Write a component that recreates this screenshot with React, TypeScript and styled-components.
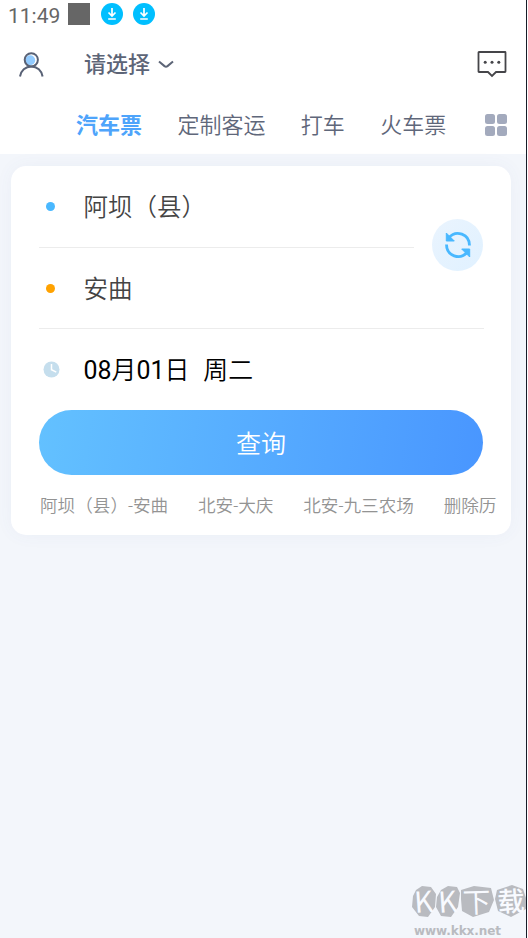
import React from 'react';
import styled, { createGlobalStyle } from 'styled-components';

const Global = createGlobalStyle`
  * { box-sizing: border-box; }
  body { margin: 0; background: #fff; }
`;

const Screen = styled.div`
  position: relative;
  width: 527px;
  height: 938px;
  display: flex;
  flex-direction: column;
  background: #f3f6fb;
  border-right: 1px solid #171c28;
  font-family: Roboto, 'Noto Sans CJK SC', sans-serif;
  white-space: nowrap;
`;

const Header = styled.header`
  height: 154px;
  flex: none;
  background: #fff;
`;

const StatusBar = styled.div`
  height: 30px;
  display: flex;
  align-items: center;
  padding: 0 0 2px 8px;
  color: #666;
  font-size: 21px;
`;

const Time = styled.span`
  width: 60px;
  line-height: 28px;
  padding-top: 3px;
`;

const StatusBlock = styled.span`
  width: 22px;
  height: 22px;
  margin-right: 11px;
  background: #666;
`;

const DownloadIcon = styled.svg`
  width: 22px;
  height: 22px;
  margin-right: 10px;
`;

const TopBar = styled.div`
  height: 68px;
  display: flex;
  align-items: center;
  padding: 0 19px 0 18px;
`;

const CityPicker = styled.div`
  display: flex;
  align-items: center;
  flex: 1;
  margin-left: 39px;
  gap: 8px;
  color: #5d6577;
  font-size: 22px;
  font-weight: 500;
  line-height: 32px;
`;

const CityName = styled.span`
  padding-top: 2px;
`;

const Tabs = styled.nav`
  height: 54px;
  display: flex;
  align-items: center;
  gap: 35.4px;
  padding-left: 76px;
`;

const Tab = styled.span<{ $active?: boolean }>`
  padding-top: 2px;
  color: ${p => (p.$active ? '#4ea4fb' : '#5f677a')};
  font-size: 22px;
  line-height: 32px;
  font-weight: ${p => (p.$active ? 700 : 350)};
`;

const Grid = styled.span`
  display: grid;
  grid-template-columns: 10px 10px;
  gap: 2px;
  margin-left: 3px;
`;

const GridCell = styled.i`
  height: 10px;
  border-radius: 2.5px;
  background: #a3aabd;
`;

const Card = styled.main`
  width: 500px;
  height: 369px;
  margin: 12px 0 0 11px;
  padding: 0 0 0 28px;
  border-radius: 15px;
  background: #fff;
  box-shadow: 0 0 18px rgba(70, 90, 160, 0.05);
`;

const Route = styled.div`
  display: flex;
  align-items: center;
  gap: 18px;
`;

const Stops = styled.div`
  width: 375px;
`;

const Field = styled.div<{ $line?: boolean; $height: number; $width?: number; $color?: string }>`
  height: ${p => p.$height}px;
  width: ${p => p.$width ?? 375}px;
  display: flex;
  align-items: center;
  color: ${p => p.$color ?? '#444'};
  font-weight: 350;
  line-height: 36px;
  border-bottom: ${p => (p.$line ? '1px solid #ececec' : '0')};
`;

const FieldText = styled.span<{ $size?: number }>`
  padding: 3px 0 0 0.5px;
  font-size: ${p => p.$size ?? 24.5}px;
`;

const Digits = styled.span`
  font-weight: 400;
`;

const Marker = styled.span`
  width: 44px;
  padding-left: 4px;
  display: flex;
`;

const Dot = styled.i<{ $color: string }>`
  width: 9px;
  height: 9px;
  margin-left: 3px;
  border-radius: 50%;
  background: ${p => p.$color};
`;

const Weekday = styled.span`
  margin-left: 14px;
`;

const SwapButton = styled.button`
  width: 51px;
  height: 52px;
  margin-top: -5px;
  padding: 0;
  border: 0;
  border-radius: 50%;
  background: linear-gradient(135deg, #eaf4fe, #e0f1ff);
  display: flex;
  align-items: center;
  justify-content: center;
`;

const SearchButton = styled.button`
  display: block;
  width: 444px;
  height: 65px;
  margin: 0 0 17px;
  padding: 4px 0 0;
  border: 0;
  border-radius: 33px;
  background: linear-gradient(98deg, #63c1ff, #4996ff);
  color: #fff;
  font: 350 25px/61px Roboto, 'Noto Sans CJK SC', sans-serif;
`;

const History = styled.div`
  display: flex;
  gap: 29.8px;
  padding-left: 1px;
  color: #939393;
  font-size: 17.6px;
  font-weight: 350;
  line-height: 28px;
`;

const Watermark = styled.aside`
  position: absolute;
  left: 411px;
  top: 880px;
  width: 115px;
  height: 58px;
`;

function Download() {
  return (
    <DownloadIcon viewBox="0 0 22 22" fill="none">
      <circle cx="11" cy="11" r="11" fill="#00bfff" />
      <path d="M11 5v8M7.500 9.500 11 13l3.500-3.500M7.200 16h7.600" stroke="#fff" strokeWidth="1.700" />
    </DownloadIcon>
  );
}

export default function App() {
  return (
    <>
      <Global />
      <Screen>
        <Header>
          <StatusBar>
            <Time>11:49</Time>
            <StatusBlock />
            <Download />
            <Download />
          </StatusBar>
          <TopBar>
            <svg width="27" height="28" viewBox="0 0 27 28" fill="none">
              <circle cx="12.200" cy="10.200" r="5" fill="#92cbff" />
              <circle cx="13.300" cy="9.800" r="6.600" stroke="#596276" strokeWidth="2" />
              <path d="M2 26.500c.8-6 5.500-10.100 11.300-10.100S23.800 20.500 24.600 26.500" stroke="#596276" strokeWidth="2" />
            </svg>
            <CityPicker>
              <CityName>请选择</CityName>
              <svg width="16" height="9" viewBox="0 0 16 9" fill="none">
                <path d="m1 1.500 5.500 4.600q1.500 1.100 3 0L15 1.500" stroke="#5d6577" strokeWidth="2" />
              </svg>
            </CityPicker>
            <svg width="30" height="28" viewBox="0 0 30 28" fill="none">
              <path d="M2 2h26q.5 0 .5.500v19q0 .5-.5.500h-9l-4 4-4-4H2q-.5 0-.5-.5V2.500q0-.5.5-.5Z" stroke="#454549" strokeWidth="1.800" />
              <g fill="#454549"><circle cx="8.200" cy="12.200" r="1.500" /><circle cx="15" cy="12.200" r="1.500" /><circle cx="21.800" cy="12.200" r="1.500" /></g>
            </svg>
          </TopBar>
          <Tabs>
            <Tab $active>汽车票</Tab>
            <Tab>定制客运</Tab>
            <Tab>打车</Tab>
            <Tab>火车票</Tab>
            <Grid><GridCell /><GridCell /><GridCell /><GridCell /></Grid>
          </Tabs>
        </Header>
        <Card>
          <Route>
            <Stops>
              <Field $height={82} $line><Marker><Dot $color="#49b8ff" /></Marker><FieldText>阿坝（县）</FieldText></Field>
              <Field $height={81} $width={445} $line><Marker><Dot $color="#ffa200" /></Marker><FieldText>安曲</FieldText></Field>
            </Stops>
            <SwapButton aria-label="swap">
              <svg width="28" height="28" viewBox="0 0 28 28" fill="none">
                <path d="M5 6.500C12-1.500 25.500 3 25.500 14.500M23 21.500C16 29.500 2.500 25 2.500 13.500" stroke="#49b8ff" strokeWidth="2.800" />
                <path d="M2.300 2v8h8ZM25.700 26v-8h-8Z" fill="#49b8ff" stroke="#49b8ff" strokeLinejoin="round" />
              </svg>
            </SwapButton>
          </Route>
          <Field $height={81} $color="#000">
            <Marker>
              <svg width="17" height="17" viewBox="0 0 17 17" fill="none">
                <circle cx="8.500" cy="8.500" r="8" fill="#c5deed" />
                <path d="M8.500 3v5.700l4.800 2.500" stroke="#fff" strokeWidth="1.500" />
              </svg>
            </Marker>
            <FieldText $size={24.9}><Digits>08</Digits>月<Digits>01</Digits>日<Weekday>周二</Weekday></FieldText>
          </Field>
          <SearchButton>查询</SearchButton>
          <History>
            <span>阿坝（县）-安曲</span>
            <span>北安-大庆</span>
            <span>北安-九三农场</span>
            <span>删除历</span>
          </History>
        </Card>
        <Watermark>
          <svg width="115" height="58" viewBox="0 0 115 58">
            <path d="M5 10 11 6l9 1 5 7-1 13-7 10-9-1-7-9 1-11ZM30 10l7-4 9 1 3 6-2 14-7 10-10-1-5-9 1-10ZM50 10l13-4 17 2 3 12-5 12-16 5-11-6-1-12ZM86 10l15-5 11 4 3 9v11l-15 8-13-6-3-12Z" fill="#b9bbc0" />
            <g fontFamily="Noto Sans CJK SC" fontWeight="400" fill="#f8faff">
              <text transform="translate(4 33) rotate(-4)" fontSize="29">K</text>
              <text transform="translate(28 33) rotate(-4)" fontSize="29">K</text>
              <text transform="translate(52 33) rotate(-2)" fontSize="28">下</text>
              <text transform="translate(87 32) rotate(-3)" fontSize="27" fontWeight="500">载</text>
            </g>
            <text x="3" y="55" fontFamily="DejaVu Sans" fontWeight="700" fontSize="12" textLength="87" lengthAdjust="spacing" fill="#b9bbc0">www.kkx.net</text>
          </svg>
        </Watermark>
      </Screen>
    </>
  );
}
